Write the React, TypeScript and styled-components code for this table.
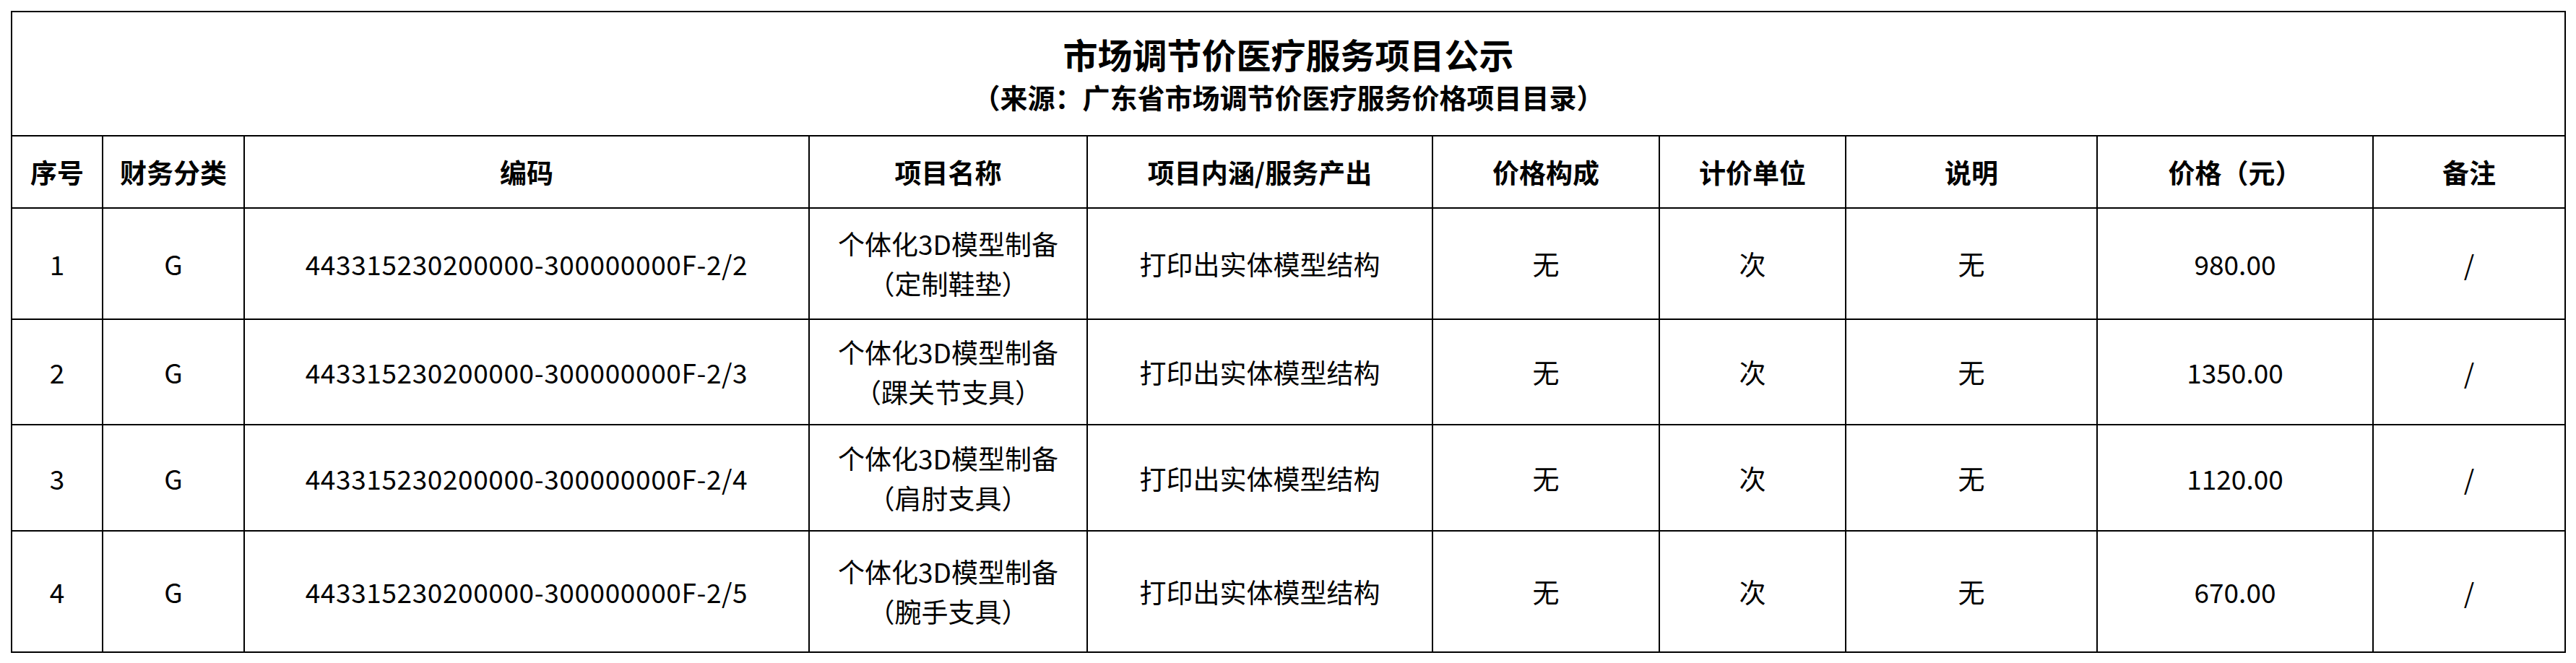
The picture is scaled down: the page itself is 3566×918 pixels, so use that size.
import styled, { createGlobalStyle } from "styled-components";


const GlobalStyle = createGlobalStyle`
    html, body {
        margin: 0;
        padding: 0;
        background: #ffffff;
    }
    body {
        font-family: "Noto Sans CJK SC", "Noto Sans", sans-serif;
        color: #000000;
    }
`

interface Row {
    no: string;
    category: string;
    code: string;
    name: string;
    subName: string;
    content: string;
    composition: string;
    unit: string;
    note: string;
    price: string;
    remark: string;
    height: number;
}

const columnWidths = [126, 196, 782, 385, 478, 314, 258, 348, 382, 266];

const headers = [
    "序号",
    "财务分类",
    "编码",
    "项目名称",
    "项目内涵/服务产出",
    "价格构成",
    "计价单位",
    "说明",
    "价格（元）",
    "备注",
];

const rows: Row[] = [
    {no: "1", category: "G", code: "443315230200000-300000000F-2/2", name: "个体化3D模型制备", subName: "（定制鞋垫）", content: "打印出实体模型结构", composition: "无", unit: "次", note: "无", price: "980.00", remark: "/", height: 154},
    {no: "2", category: "G", code: "443315230200000-300000000F-2/3", name: "个体化3D模型制备", subName: "（踝关节支具）", content: "打印出实体模型结构", composition: "无", unit: "次", note: "无", price: "1350.00", remark: "/", height: 146},
    {no: "3", category: "G", code: "443315230200000-300000000F-2/4", name: "个体化3D模型制备", subName: "（肩肘支具）", content: "打印出实体模型结构", composition: "无", unit: "次", note: "无", price: "1120.00", remark: "/", height: 147},
    {no: "4", category: "G", code: "443315230200000-300000000F-2/5", name: "个体化3D模型制备", subName: "（腕手支具）", content: "打印出实体模型结构", composition: "无", unit: "次", note: "无", price: "670.00", remark: "/", height: 168},
];


function App(){
    return(
        <>
            <GlobalStyle/>
            <PageWrapper>
                <PriceTable>
                    <colgroup>
                        {columnWidths.map((w, i) => (
                            <col key={i} style={{width: w}}/>
                        ))}
                    </colgroup>
                    <thead>
                        <TableRow $height={172}>
                            <TitleCell colSpan={10}>
                                <TitleText>市场调节价医疗服务项目公示</TitleText>
                                <SubTitleText>（来源：广东省市场调节价医疗服务价格项目目录）</SubTitleText>
                            </TitleCell>
                        </TableRow>
                        <TableRow $height={100}>
                            {headers.map((h) => (
                                <HeaderCell key={h}>{h}</HeaderCell>
                            ))}
                        </TableRow>
                    </thead>
                    <tbody>
                        {rows.map((r) => (
                            <TableRow key={r.no} $height={r.height}>
                                <BodyCell>{r.no}</BodyCell>
                                <BodyCell>{r.category}</BodyCell>
                                <BodyCell>
                                    <CodeText>{r.code}</CodeText>
                                </BodyCell>
                                <BodyCell>
                                    <NameLine>{r.name}</NameLine>
                                    <NameLine>{r.subName}</NameLine>
                                </BodyCell>
                                <BodyCell>{r.content}</BodyCell>
                                <BodyCell>{r.composition}</BodyCell>
                                <BodyCell>{r.unit}</BodyCell>
                                <BodyCell>{r.note}</BodyCell>
                                <BodyCell>{r.price}</BodyCell>
                                <BodyCell>{r.remark}</BodyCell>
                            </TableRow>
                        ))}
                    </tbody>
                </PriceTable>
            </PageWrapper>
        </>
    )
}


const PageWrapper = styled.div`
    padding: 15px 0 0 15px;
    width: 3566px;
    box-sizing: border-box;
`

const PriceTable = styled.table`
    border-collapse: collapse;
    table-layout: fixed;
    width: 3537px;
    border: 2px solid #000000;
`

const TableRow = styled.tr<{$height: number}>`
    height: ${props => props.$height}px;
`

const TitleCell = styled.td`
    border: 2px solid #000000;
    text-align: center;
    vertical-align: middle;
    padding: 2px 0 0 0;
`

const TitleText = styled.div`
    font-size: 48px;
    font-weight: 700;
    line-height: 62px;
`

const SubTitleText = styled.div`
    font-size: 38px;
    font-weight: 700;
    line-height: 58px;
`

const HeaderCell = styled.th`
    border: 2px solid #000000;
    font-size: 37px;
    font-weight: 700;
    text-align: center;
    vertical-align: middle;
    padding: 0;
    white-space: nowrap;
`

const BodyCell = styled.td`
    border: 2px solid #000000;
    font-size: 37px;
    font-weight: 400;
    text-align: center;
    vertical-align: middle;
    padding: 0;
    white-space: nowrap;
`

const CodeText = styled.span`
    letter-spacing: 0.6px;
`

const NameLine = styled.div`
    line-height: 55px;
`


export default App;
